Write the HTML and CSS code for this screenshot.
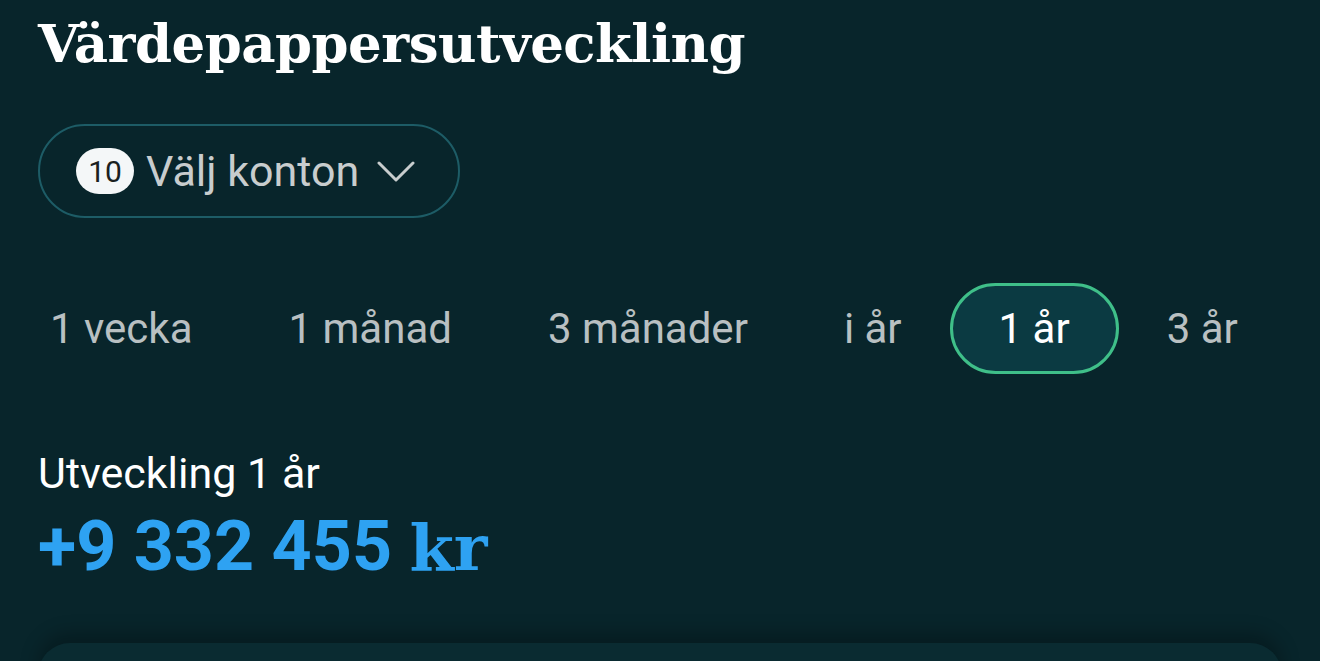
FILE: index.html
```html
<!DOCTYPE html>
<html lang="sv">
<head>
    <meta charset="UTF-8">
    <meta name="viewport" content="width=device-width, initial-scale=1.0">
    <title>Värdepappersutveckling</title>
    <link rel="stylesheet" href="styles.css">
</head>
<body>
    <main class="page">
        <h1 class="title">Värdepappersutveckling</h1>

        <div class="account-row">
            <button class="account-select">
                <span class="badge">10</span>
                <span class="account-label">Välj konton</span>
                <svg class="chevron" width="38" height="24" viewBox="0 0 38 24">
                    <path d="M2 3 L19 20 L36 3" fill="none" stroke="#c8cdce" stroke-width="3" stroke-linecap="round" stroke-linejoin="round"/>
                </svg>
            </button>
        </div>

        <nav class="periods">
            <span class="period">1 vecka</span>
            <span class="period">1 månad</span>
            <span class="period">3 månader</span>
            <span class="period">i år</span>
            <span class="period active">1 år</span>
            <span class="period">3 år</span>
        </nav>

        <section class="result">
            <div class="result-label">Utveckling 1 år</div>
            <div class="result-value">+9 332 455 <span class="unit">kr</span></div>
        </section>

        <div class="card"></div>
    </main>
</body>
</html>
```

FILE: styles.css
```css
* {
    box-sizing: border-box;
}

body {
    margin: 0;
    height: 100vh;
    overflow: hidden;
    background-color: #08252b;
    font-family: Roboto, 'Noto Sans', sans-serif;
    color: #f3f3f3;
}

.page {
    display: flex;
    flex-direction: column;
    padding: 0 38px;
}

.title {
    margin: 6px 0 0;
    font-family: 'DejaVu Serif', serif;
    font-weight: bold;
    font-size: 53px;
    line-height: 74px;
    color: #ffffff;
    letter-spacing: -.01em;
}

.account-row {
    display: flex;
    margin-top: 44px;
}

.account-select {
    display: flex;
    align-items: center;
    gap: 12px;
    height: 94px;
    padding: 0 43px 0 36px;
    border: 2px solid #1d5c66;
    border-radius: 47px;
    background-color: transparent;
    font-family: inherit;
}

.badge {
    display: flex;
    align-items: center;
    justify-content: center;
    width: 58px;
    height: 46px;
    border-radius: 23px;
    background-color: #f4f7f8;
    color: #1a1f21;
    font-size: 30px;
}

.account-label {
    font-size: 43px;
    color: #c8cdce;
}

.chevron {
    margin-left: 6px;
    margin-top: 2px;
}

.periods {
    display: flex;
    align-items: center;
    margin: 65px 0 0 -36px;
}

.period {
    display: flex;
    align-items: center;
    flex-shrink: 0;
    height: 91px;
    padding: 0 45px;
    font-size: 42px;
    white-space: nowrap;
    color: #b9c0c2;
    border: 3px solid transparent;
    border-radius: 46px;
}

.period.active {
    padding: 0 46px;
    border-color: #3fbf89;
    background-color: #0b3a42;
    color: #ffffff;
}

.result {
    margin-top: 74px;
}

.result-label {
    font-size: 43px;
    line-height: 50px;
    color: #ffffff;
}

.result-value {
    margin-top: 6px;
    font-weight: bold;
    font-size: 70px;
    line-height: 84px;
    color: #2ea2f2;
}

.unit {
    font-family: 'DejaVu Serif', serif;
    font-size: 64px;
}

.card {
    margin-top: 53px;
    height: 200px;
    border-radius: 32px;
    background-color: #0a2b31;
    box-shadow: 0 -10px 18px rgba(0, 0, 0, .25);
}
```
